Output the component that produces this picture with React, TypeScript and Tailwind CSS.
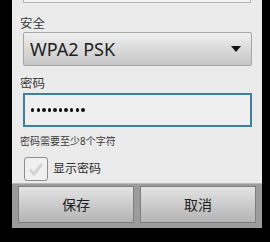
import React from "react";

const cjk = "font-['Noto_Sans','Noto_Sans_CJK_SC',sans-serif]";

export default function App() {
  return (
    <div className="w-[270px] h-[242px] bg-black overflow-hidden">
      <div className="ml-[12px] w-[250px] h-[228px] flex flex-col bg-[#ebebeb]">
        {/* bottom of the field above */}
        <div className="mx-[11px] h-[3px] border-x border-b border-[#b4b4b4] bg-[#f2f2f2]" />

        <div className={`${cjk} h-[29px] pl-[8px] pt-[14px] text-[12.5px] leading-[14px] text-[#3a3a3a]`}>
          安全
        </div>

        <div className="ml-[11px] w-[229px] h-[34px] flex items-center justify-between pl-[6px] pr-[10px] rounded-[2px] border border-[#a6a6a6] bg-gradient-to-b from-[#efefef] to-[#c6c6c6]">
          <span className="font-['Noto_Sans',sans-serif] text-[18px] leading-none text-[#1e1e1e]">
            WPA2 PSK
          </span>
          <svg width="10" height="6" viewBox="0 0 10 6">
            <path d="M0 0h10L5 6z" fill="#111" />
          </svg>
        </div>

        <div className={`${cjk} h-[27px] pl-[8px] pt-[11px] text-[12.5px] leading-[14px] text-[#3a3a3a]`}>
          密码
        </div>

        <div className="ml-[11px] w-[229px] h-[34px] flex items-center pl-[6px] border-2 border-[#3f7f9b] bg-[#efefef]">
          <div className="flex gap-[2.2px]">
            {Array.from({ length: 10 }).map((_, i) => (
              <div key={i} className="w-[3.4px] h-[3.4px] rounded-full bg-[#111]" />
            ))}
          </div>
        </div>

        <div className={`${cjk} h-[30px] pl-[8px] pt-[7px] text-[10px] leading-[14px] text-[#3a3a3a]`}>
          密码需要至少8个字符
        </div>

        <div className="h-[26px] flex items-start pl-[12px] gap-[5px]">
          <div className="w-[24px] h-[24px] rounded-[3px] border border-[#8e8e8e] bg-[#f0f0f0] flex items-center justify-center">
            <svg width="16" height="14" viewBox="0 0 16 14">
              <path d="M2 7.5l4 4.5L14 2" fill="none" stroke="#d4d4d4" strokeWidth="3" />
            </svg>
          </div>
          <span className={`${cjk} pt-[5px] text-[12px] leading-[14px] text-[#2e2e2e]`}>显示密码</span>
        </div>

        <div className="flex-1 flex gap-[6px] px-[6px] pt-[2px] pb-[5px] bg-[#9c9c9c] border-t border-[#b8b8b8]">
          <div className={`${cjk} flex-1 flex items-center justify-center border border-[#7e7e7e] bg-gradient-to-b from-[#e4e4e4] to-[#b4b4b4] text-[14px] text-[#222]`}>
            保存
          </div>
          <div className={`${cjk} flex-1 flex items-center justify-center border border-[#7e7e7e] bg-gradient-to-b from-[#e4e4e4] to-[#b4b4b4] text-[14px] text-[#222]`}>
            取消
          </div>
        </div>
      </div>
    </div>
  );
}
